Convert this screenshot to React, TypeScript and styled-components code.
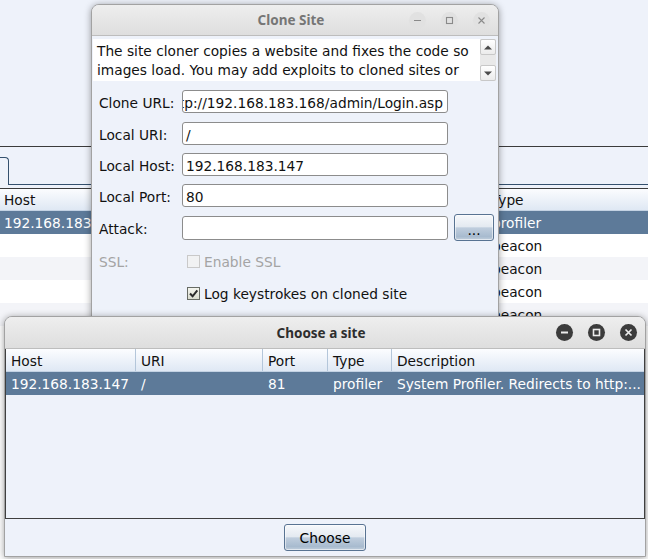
import React from "react";
import styled, { createGlobalStyle } from "styled-components";

const UI_FONT = `"DejaVu Sans", "Liberation Sans", sans-serif`;
const TITLE_FONT = `"Noto Sans", "Open Sans", "DejaVu Sans", sans-serif`;

const GlobalStyle = createGlobalStyle`
  html, body { margin: 0; padding: 0; }
  body {
    background: #eef2fa;
    font-family: ${UI_FONT};
    font-size: 13.75px;
    color: #111;
  }
  * { box-sizing: border-box; }
`;

const Desktop = styled.div`
  position: relative;
  width: 648px;
  height: 559px;
  overflow: hidden;
  background: #eef2fa;
`;

/* ---------- main application pane (behind the dialogs) ---------- */

const MainPane = styled.div`
  display: flex;
  flex-direction: column;
  height: 100%;
`;

const TopPane = styled.div`
  flex: 0 0 147px;
  border-bottom: 1px solid #3b3b3b;
`;

const TabStrip = styled.div`
  flex: 0 0 38px;
  display: flex;
  align-items: flex-end;
`;

const Tab = styled.div`
  width: 57px;
  margin-left: -48px;
  height: 28px;
  border: 1px solid #34506d;
  border-bottom: none;
  border-radius: 0 4px 0 0;
`;

const TabRule = styled.div`
  flex: 1;
  height: 100%;
  border-bottom: 1px solid #34506d;
`;

const TableGap = styled.div`
  flex: 0 0 3px;
`;

const SiteTable = styled.div`
  flex: 1;
  border-top: 1px solid #3b3b3b;
  background: #fff;
`;

const SiteRow = styled.div<{ $kind: "head" | "sel" | "odd" | "even" }>`
  display: grid;
  grid-template-columns: 488px 1fr;
  height: ${(p) => (p.$kind === "head" ? 22 : 23)}px;
  align-items: center;
  color: ${(p) => (p.$kind === "sel" ? "#fff" : "#111")};
  background: ${(p) =>
    p.$kind === "head"
      ? "linear-gradient(#fbfcfe, #dfe8f4)"
      : p.$kind === "sel"
      ? "#5d7a99"
      : p.$kind === "odd"
      ? "#f3f4f8"
      : "#ffffff"};
  border-bottom: ${(p) => (p.$kind === "head" ? "1px solid #c3d2e3" : "none")};
`;

const SiteCell = styled.div`
  padding: 1px 4px 0 4px;
  white-space: nowrap;
  overflow: hidden;
`;

/* ---------- generic window frame ---------- */

const Window = styled.div<{ $x: number; $y: number; $w: number; $h: number }>`
  position: absolute;
  left: ${(p) => p.$x}px;
  top: ${(p) => p.$y}px;
  width: ${(p) => p.$w}px;
  height: ${(p) => p.$h}px;
  display: flex;
  flex-direction: column;
  background: #eef2fa;
  border: 1px solid #a2a2a2;
  border-radius: 8px 8px 0 0;
  box-shadow: 0 1px 7px rgba(0, 0, 0, 0.38);
  overflow: hidden;
`;

const TitleBar = styled.div<{ $h: number }>`
  flex: 0 0 ${(p) => p.$h}px;
  display: grid;
  grid-template-columns: 1fr auto 1fr;
  align-items: center;
  padding-right: 8px;
  background: linear-gradient(#eeeeee, #dedede);
  border-bottom: 1px solid #bdbdbd;
`;

const Title = styled.div<{ $active: boolean }>`
  font-family: ${TITLE_FONT};
  font-weight: 700;
  font-size: 13.5px;
  color: ${(p) => (p.$active ? "#2e2e2e" : "#767676")};
  white-space: nowrap;
`;

const Controls = styled.div`
  justify-self: end;
  display: flex;
  gap: 15px;
`;

const CtrlButton = styled.div<{ $active: boolean }>`
  width: 17px;
  height: 17px;
  border-radius: 50%;
  display: flex;
  align-items: center;
  justify-content: center;
  background: ${(p) => (p.$active ? "#3c3c3c" : "#e1e1e1")};
  color: ${(p) => (p.$active ? "#ececec" : "#8a8a8a")};
`;

function WindowControls({ active }: { active: boolean }) {
  return (
    <Controls>
      <CtrlButton $active={active}>
        <svg width="9" height="9" viewBox="0 0 9 9">
          <path d="M1 4.5h7" stroke="currentColor" strokeWidth={active ? 2 : 1.2} />
        </svg>
      </CtrlButton>
      <CtrlButton $active={active}>
        <svg width="9" height="9" viewBox="0 0 9 9">
          <rect x="1.5" y="1.5" width="6" height="6" fill="none" stroke="currentColor" strokeWidth={active ? 1.6 : 1.1} />
        </svg>
      </CtrlButton>
      <CtrlButton $active={active}>
        <svg width="9" height="9" viewBox="0 0 9 9">
          <path d="M1.5 1.5l6 6M7.5 1.5l-6 6" stroke="currentColor" strokeWidth={active ? 1.7 : 1.1} />
        </svg>
      </CtrlButton>
    </Controls>
  );
}

/* ---------- Clone Site dialog ---------- */

const CloneBody = styled.div`
  flex: 1;
  display: flex;
  flex-direction: column;
  padding: 3px 2px 0 1px;
`;

const ScrollPane = styled.div`
  display: flex;
  height: 42px;
`;

const TextArea = styled.div`
  flex: 1;
  background: #fff;
  padding: 3px 4px 0 4px;
  line-height: 19px;
  overflow: hidden;
  white-space: nowrap;
  color: #111;
`;

const TextLine = styled.div``;

const ScrollBar = styled.div`
  width: 16px;
  display: flex;
  flex-direction: column;
  justify-content: space-between;
  background: #e9e9e9;
`;

const ArrowButton = styled.div`
  height: 16px;
  border: 1px solid #c8c8c8;
  border-radius: 2px;
  background: linear-gradient(#ffffff, #ebebeb);
  display: flex;
  align-items: center;
  justify-content: center;
  color: #4a4a4a;
`;

const Form = styled.div`
  display: flex;
  flex-direction: column;
  padding-left: 6px;
`;

const FormRow = styled.div<{ $mt: number; $h: number }>`
  display: grid;
  grid-template-columns: 77px 266px 40px;
  column-gap: 6px;
  align-items: center;
  margin-top: ${(p) => p.$mt}px;
  height: ${(p) => p.$h}px;
`;

const Label = styled.div<{ $disabled?: boolean }>`
  padding-top: 2px;
  white-space: nowrap;
  color: ${(p) => (p.$disabled ? "#a4a4a4" : "#111")};
`;

const Field = styled.div<{ $alignEnd?: boolean; $h?: number }>`
  height: ${(p) => p.$h ?? 23}px;
  background: #fff;
  border: 1px solid #8c8c8c;
  border-radius: 3px;
  display: flex;
  align-items: center;
  justify-content: ${(p) => (p.$alignEnd ? "flex-end" : "flex-start")};
  padding: 2px 4px 0 3px;
  overflow: hidden;
  white-space: nowrap;
  color: #111;
`;

const JButton = styled.div<{ $w: number; $padTop?: number }>`
  width: ${(p) => p.$w}px;
  height: 27px;
  border: 1px solid #587392;
  border-radius: 3px;
  background: linear-gradient(
    to bottom,
    #f6f8fb 0%,
    #e4eaf1 46%,
    #bfcddd 52%,
    #a8bbcf 86%,
    #c2cfdd 100%
  );
  box-shadow: inset 0 0 0 1px rgba(255, 255, 255, 0.55);
  display: flex;
  align-items: center;
  justify-content: center;
  padding-top: ${(p) => p.$padTop ?? 0}px;
  color: #000;
  white-space: nowrap;
`;

const CheckLine = styled.div<{ $disabled?: boolean }>`
  grid-column: 2 / span 2;
  display: flex;
  align-items: center;
  gap: 4px;
  padding-left: 5px;
  color: ${(p) => (p.$disabled ? "#a4a4a4" : "#111")};
  white-space: nowrap;
`;

const CheckBox = styled.div<{ $disabled?: boolean }>`
  width: 13px;
  height: 13px;
  border: 1px solid ${(p) => (p.$disabled ? "#c9c9c9" : "#676b64")};
  background: ${(p) =>
    p.$disabled ? "#f1f2f3" : "linear-gradient(#f4f5ee, #dadccf)"};
  display: flex;
  align-items: center;
  justify-content: center;
`;

const CheckText = styled.span`
  padding-top: 2px;
`;

/* ---------- Choose a site dialog ---------- */

const ChooseTable = styled.div`
  flex: 0 0 170px;
  border: 1px solid #3f3f3f;
  border-top: none;
  display: flex;
  flex-direction: column;
`;

const ChooseRow = styled.div<{ $head?: boolean; $sel?: boolean }>`
  display: grid;
  grid-template-columns: 130px 127px 65px 64px 1fr;
  height: 23px;
  align-items: stretch;
  color: ${(p) => (p.$sel ? "#fff" : "#111")};
  background: ${(p) =>
    p.$head ? "linear-gradient(#fcfdff, #dfe8f4)" : p.$sel ? "#5d7a99" : "transparent"};
  border-bottom: ${(p) => (p.$head ? "1px solid #c3d2e3" : "none")};
`;

const ChooseCell = styled.div<{ $head?: boolean }>`
  display: flex;
  align-items: center;
  padding: 1px 0 0 5px;
  overflow: hidden;
  white-space: nowrap;
  border-right: ${(p) => (p.$head ? "1px solid #b4c6da" : "none")};
  &:last-child {
    border-right: none;
  }
`;

const Footer = styled.div`
  flex: 1;
  display: flex;
  justify-content: center;
  padding-top: 5px;
`;

const siteRows = [
  { host: "192.168.183.147", type: "profiler" },
  { host: "", type: "beacon" },
  { host: "", type: "beacon" },
  { host: "", type: "beacon" },
  { host: "", type: "beacon" },
];

function ArrowIcon({ down }: { down?: boolean }) {
  return (
    <svg width="8" height="5" viewBox="0 0 8 5">
      <path d={down ? "M0 0.5h8L4 4.5z" : "M0 4.5h8L4 0.5z"} fill="currentColor" />
    </svg>
  );
}

export default function App() {
  return (
    <>
      <GlobalStyle />
      <Desktop>
        <MainPane>
          <TopPane />
          <TabStrip>
            <Tab />
            <TabRule />
          </TabStrip>
          <TableGap />
          <SiteTable>
            <SiteRow $kind="head">
              <SiteCell>Host</SiteCell>
              <SiteCell>Type</SiteCell>
            </SiteRow>
            {siteRows.map((r, i) => (
              <SiteRow key={i} $kind={i === 0 ? "sel" : i % 2 === 0 ? "odd" : "even"}>
                <SiteCell>{r.host}</SiteCell>
                <SiteCell>{r.type}</SiteCell>
              </SiteRow>
            ))}
          </SiteTable>
        </MainPane>

        <Window $x={91} $y={4} $w={408} $h={350}>
          <TitleBar $h={31}>
            <span />
            <Title $active={false}>Clone Site</Title>
            <WindowControls active={false} />
          </TitleBar>
          <CloneBody>
            <ScrollPane>
              <TextArea>
                <TextLine>The site cloner copies a website and fixes the code so</TextLine>
                <TextLine>images load. You may add exploits to cloned sites or</TextLine>
              </TextArea>
              <ScrollBar>
                <ArrowButton>
                  <ArrowIcon />
                </ArrowButton>
                <ArrowButton>
                  <ArrowIcon down />
                </ArrowButton>
              </ScrollBar>
            </ScrollPane>
            <Form>
              <FormRow $mt={9} $h={23}>
                <Label>Clone URL:</Label>
                <Field $alignEnd>http://192.168.183.168/admin/Login.asp</Field>
              </FormRow>
              <FormRow $mt={9} $h={23}>
                <Label>Local URI:</Label>
                <Field>/</Field>
              </FormRow>
              <FormRow $mt={8} $h={23}>
                <Label>Local Host:</Label>
                <Field>192.168.183.147</Field>
              </FormRow>
              <FormRow $mt={8} $h={23}>
                <Label>Local Port:</Label>
                <Field>80</Field>
              </FormRow>
              <FormRow $mt={7} $h={27}>
                <Label>Attack:</Label>
                <Field $h={24}></Field>
                <JButton $w={40} $padTop={4}>...</JButton>
              </FormRow>
              <FormRow $mt={10} $h={20}>
                <Label $disabled>SSL:</Label>
                <CheckLine $disabled>
                  <CheckBox $disabled />
                  <CheckText>Enable SSL</CheckText>
                </CheckLine>
              </FormRow>
              <FormRow $mt={12} $h={20}>
                <span />
                <CheckLine>
                  <CheckBox>
                    <svg width="11" height="11" viewBox="0 0 11 11">
                      <path d="M2 5.5l2.6 2.8L9.3 2.3" fill="none" stroke="#2b2b2b" strokeWidth="2" />
                    </svg>
                  </CheckBox>
                  <CheckText>Log keystrokes on cloned site</CheckText>
                </CheckLine>
              </FormRow>
            </Form>
          </CloneBody>
        </Window>

        <Window $x={4} $y={316} $w={642} $h={241}>
          <TitleBar $h={32}>
            <span />
            <Title $active>Choose a site</Title>
            <WindowControls active />
          </TitleBar>
          <ChooseTable>
            <ChooseRow $head>
              <ChooseCell $head>Host</ChooseCell>
              <ChooseCell $head>URI</ChooseCell>
              <ChooseCell $head>Port</ChooseCell>
              <ChooseCell $head>Type</ChooseCell>
              <ChooseCell $head>Description</ChooseCell>
            </ChooseRow>
            <ChooseRow $sel>
              <ChooseCell>192.168.183.147</ChooseCell>
              <ChooseCell>/</ChooseCell>
              <ChooseCell>81</ChooseCell>
              <ChooseCell>profiler</ChooseCell>
              <ChooseCell>System Profiler. Redirects to http:...</ChooseCell>
            </ChooseRow>
          </ChooseTable>
          <Footer>
            <JButton $w={82}>Choose</JButton>
          </Footer>
        </Window>
      </Desktop>
    </>
  );
}
